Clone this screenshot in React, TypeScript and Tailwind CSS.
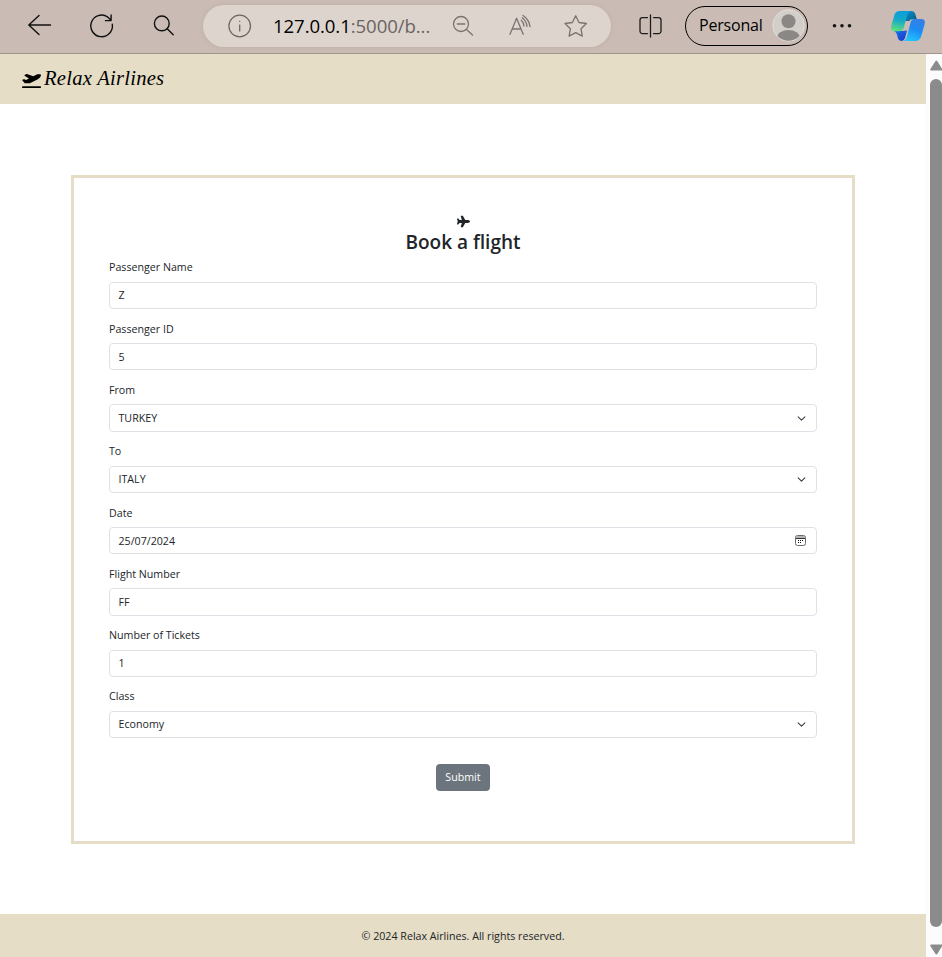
import React from "react";
import { FaPlane, FaPlaneDeparture } from "react-icons/fa6";

type Kind = "text" | "select" | "date";
type FieldData = { label: string; value: string; kind: Kind };

const fields: FieldData[] = [
  { label: "Passenger Name", value: "Z", kind: "text" },
  { label: "Passenger ID", value: "5", kind: "text" },
  { label: "From", value: "TURKEY", kind: "select" },
  { label: "To", value: "ITALY", kind: "select" },
  { label: "Date", value: "25/07/2024", kind: "date" },
  { label: "Flight Number", value: "FF", kind: "text" },
  { label: "Number of Tickets", value: "1", kind: "text" },
  { label: "Class", value: "Economy", kind: "select" },
];

function Chevron() {
  return (
    <svg width="9" height="9" viewBox="0 0 16 16" fill="none" className="mr-[10px]">
      <path d="m2 5 6 6 6-6" stroke="#343a40" strokeWidth="1.8" strokeLinecap="round" strokeLinejoin="round" />
    </svg>
  );
}

function Calendar() {
  return (
    <svg width="11" height="11" viewBox="0 0 11 11" className="mr-[10px]">
      <rect x="0.5" y="0.5" width="10" height="10" rx="2" fill="none" stroke="#6a6a6a" />
      <path d="M1 2h9" stroke="#b5b5b5" strokeWidth="2" />
      <path d="M1 3.5h9" stroke="#333" />
      <g fill="#111">
        <rect x="5" y="5" width="1" height="1" />
        <rect x="7" y="5" width="1" height="1" />
        <rect x="3" y="5" width="1" height="1" />
        <rect x="3" y="7" width="1" height="1" />
        <rect x="5" y="7" width="1" height="1" />
      </g>
    </svg>
  );
}

function Field({ label, value, kind }: FieldData) {
  return (
    <div className="h-[61.3px]">
      <label className="block h-4 text-[10.67px] leading-4">{label}</label>
      <div className="mt-[6.37px] flex h-[27.33px] items-center justify-between rounded-[4px] border border-[#dee2e6] bg-white pl-[8.5px]">
        <span className="text-[10.67px] leading-4">{value}</span>
        {kind === "select" && <Chevron />}
        {kind === "date" && <Calendar />}
      </div>
    </div>
  );
}

function Toolbar() {
  return (
    <header className="flex h-[54px] items-start border-b border-[#a0938b] bg-[#cabcb4] pt-[5px]">
      <svg width="203" height="42" viewBox="0 5 203 42" fill="none" stroke="#111" strokeWidth="1.4" strokeLinecap="round" strokeLinejoin="round" className="shrink-0">
        <path d="M50.5 25H29M39 15.5 28.8 25 39 34.5" />
        <path d="M112.3 24.2A10.8 10.8 0 1 1 107.6 16.9L111 20.3M111.1 15v5.6h-5.7" />
        <circle cx="161.8" cy="23.4" r="7.4" />
        <path d="m167.2 28.8 6 6" />
      </svg>
      <div className="flex h-[42px] w-[408px] shrink-0 items-center rounded-full bg-[#ded4ce] shadow-[0_0_4px_rgba(120,90,80,0.15)]">
        <svg width="24" height="24" viewBox="0 0 24 24" fill="none" stroke="#6d6865" strokeWidth="1.3" className="ml-[25px] shrink-0">
          <circle cx="11.7" cy="12" r="10.8" />
          <path d="M11.7 10.5v7" />
          <circle cx="11.7" cy="7.4" r="0.7" fill="#6d6865" stroke="none" />
        </svg>
        <span className="ml-[21px] w-[160px] whitespace-nowrap text-[18.6px] leading-6 tracking-[-0.08px] text-black">
          127.0.0.1<span className="text-[#696461]">:5000/b...</span>
        </span>
        <svg width="170" height="42" viewBox="433 5 170 42" fill="none" stroke="#79736f" strokeWidth="1.3" strokeLinecap="round" strokeLinejoin="round">
          <circle cx="461" cy="24" r="7.5" />
          <path d="m466.5 29.5 6 5.6M457.3 24h7.5" />
          <path d="m510 34.3 6.6-16 6.6 16M512.3 29h8.6M521.3 20.2c1.6 1.5 2.5 3.4 2.7 5.8M523 15.5c4 2.5 6.4 6.4 7 11M522.2 17.8c2.9 2.1 4.5 5 4.8 8.6" />
          <path d="m575.7 15.8 3.3 6.7 7.4 1-5.4 5.3 1.3 7.3-6.6-3.5-6.6 3.5 1.3-7.3-5.4-5.3 7.4-1z" />
        </svg>
      </div>
      <svg width="74" height="42" viewBox="611 5 74 42" fill="none" stroke="#1b1b1b" strokeWidth="1.3" strokeLinecap="round" className="shrink-0">
        <path d="M647.5 17.6h-5a2.5 2.5 0 0 0-2.5 2.5v11a2.5 2.5 0 0 0 2.5 2.5h5M653.5 17.6h5a2.5 2.5 0 0 1 2.5 2.5v11a2.5 2.5 0 0 1-2.5 2.5h-5M650.5 15v22" />
      </svg>
      <div className="mt-px flex h-[39.5px] w-[123px] shrink-0 items-center rounded-full border-[1.5px] border-black pl-[13px]">
        <span className="-mt-[2px] w-[73px] whitespace-nowrap text-[16px] leading-5 tracking-[-0.2px] text-black">Personal</span>
        <svg width="33" height="33" viewBox="0 0 33 33" className="shrink-0">
          <defs><clipPath id="avatar"><circle cx="16.5" cy="16.5" r="15.3" /></clipPath></defs>
          <circle cx="16.5" cy="16.5" r="15.7" fill="#d2ceca" stroke="#e2dfdb" />
          <g fill="#8b8784" clipPath="url(#avatar)">
            <circle cx="16.5" cy="12.3" r="7" />
            <ellipse cx="16.5" cy="29" rx="11.4" ry="8" />
          </g>
        </svg>
      </div>
      <svg width="134" height="42" viewBox="808 5 134 42" className="shrink-0">
        <g fill="#161616"><circle cx="834.5" cy="25.7" r="1.8" /><circle cx="842" cy="25.7" r="1.8" /><circle cx="849.5" cy="25.7" r="1.8" /></g>
        <defs>
          <linearGradient id="cpA" x1="0.5" y1="0" x2="0.3" y2="1"><stop stopColor="#0a9edc" /><stop offset=".45" stopColor="#16a9c6" /><stop offset="1" stopColor="#5fe07c" /></linearGradient>
          <linearGradient id="cpB" x1="0.8" y1="0" x2="0.4" y2="1"><stop stopColor="#3a7ce6" /><stop offset=".5" stopColor="#1c8cf4" /><stop offset="1" stopColor="#22c3fb" /></linearGradient>
          <linearGradient id="cpC" x1="0" y1="0" x2="1" y2="1"><stop stopColor="#0a94d2" /><stop offset="1" stopColor="#075a80" /></linearGradient>
          <linearGradient id="cpD" x1="0" y1="0" x2="1" y2="1"><stop stopColor="#1b74ee" /><stop offset="1" stopColor="#1835c9" /></linearGradient>
        </defs>
        <path d="M906 11h5.2q3.2 0 4.1 3.2l1.5 4.9h-3.5q-3 0-4.2 1.9h-4z" fill="url(#cpC)" />
        <path d="M894 31h8.5l4.5-.5-2 7.5q-1 3-3.2 3-3 0-4-3.3-1.2-6-3.8-6.7z" fill="url(#cpD)" />
        <path d="M900 11h11q-2.8.5-3.6 3.6l-3.7 13.1q-1 3.5-4.6 3.5h-4.3q-5 0-3.6-5l3.2-11.2Q895.5 11 900 11z" fill="url(#cpA)" />
        <path d="M914 19h7q5 0 3.6 5.2l-3.4 12.1Q919.8 41 915.5 41h-12.6q2.8-.5 3.8-3.6l3.6-13.9q1-4.5 3.7-4.5z" fill="url(#cpB)" />
      </svg>
    </header>
  );
}

function Scrollbar() {
  return (
    <div className="flex w-4 shrink-0 flex-col items-end bg-[#fcfcfc]">
      <svg width="12" height="12" viewBox="0 0 12 12" className="mt-[5px]">
        <path d="M6.4 2.6 11.3 10.6H1.2z" fill="#8b8b8b" stroke="#8b8b8b" strokeWidth="2" strokeLinejoin="round" />
      </svg>
      <div className="mt-[8px] h-[848px] w-3 rounded-full bg-[#8b8b8b]" />
      <svg width="12" height="12" viewBox="0 0 12 12" className="mt-[16px]">
        <path d="M6.4 10.4 11.3 2.4H1.2z" fill="#8b8b8b" stroke="#8b8b8b" strokeWidth="2" strokeLinejoin="round" />
      </svg>
    </div>
  );
}

export default function App() {
  return (
    <div className="flex h-[957px] w-[942px] flex-col overflow-hidden bg-white font-['Open_Sans','Noto_Sans',sans-serif] text-[#212529]">
      <Toolbar />
      <div className="flex h-[903px]">
        <div className="flex w-[926px] shrink-0 flex-col">
          <nav className="flex h-[50px] items-center bg-[#e5ddc5] pl-[22px] text-black">
            <FaPlaneDeparture className="mt-[2px] h-[17px] w-[19px]" />
            <span className="-mt-[2px] ml-[3px] whitespace-nowrap font-['Liberation_Serif',serif] text-[20.6px] italic leading-6 tracking-[0.25px]">Relax Airlines</span>
          </nav>
          <main className="flex h-[810px] flex-col px-[71px] pt-[71px]">
            <form className="flex h-[669px] flex-col border-[3px] border-[#e5ddc5] px-[35px] pt-[35px]">
              <div className="flex h-[46.4px] flex-col items-center">
                <FaPlane className="mt-[2px] h-[13px] w-[13px]" />
                <h1 className="mt-[2px] whitespace-nowrap text-[19px] font-semibold leading-6">Book a flight</h1>
              </div>
              <div>
                {fields.map((f) => <Field key={f.label} {...f} />)}
              </div>
              <button type="button" className="mt-[14.2px] h-[27px] w-[54px] shrink-0 self-center rounded-[4px] bg-[#6c757d] text-[10.67px] leading-4 text-white">Submit</button>
            </form>
          </main>
          <footer className="flex h-[43px] items-center justify-center bg-[#e5ddc5] text-[10.67px] leading-4">
            <span className="whitespace-nowrap">© 2024 Relax Airlines. All rights reserved.</span>
          </footer>
        </div>
        <Scrollbar />
      </div>
    </div>
  );
}
